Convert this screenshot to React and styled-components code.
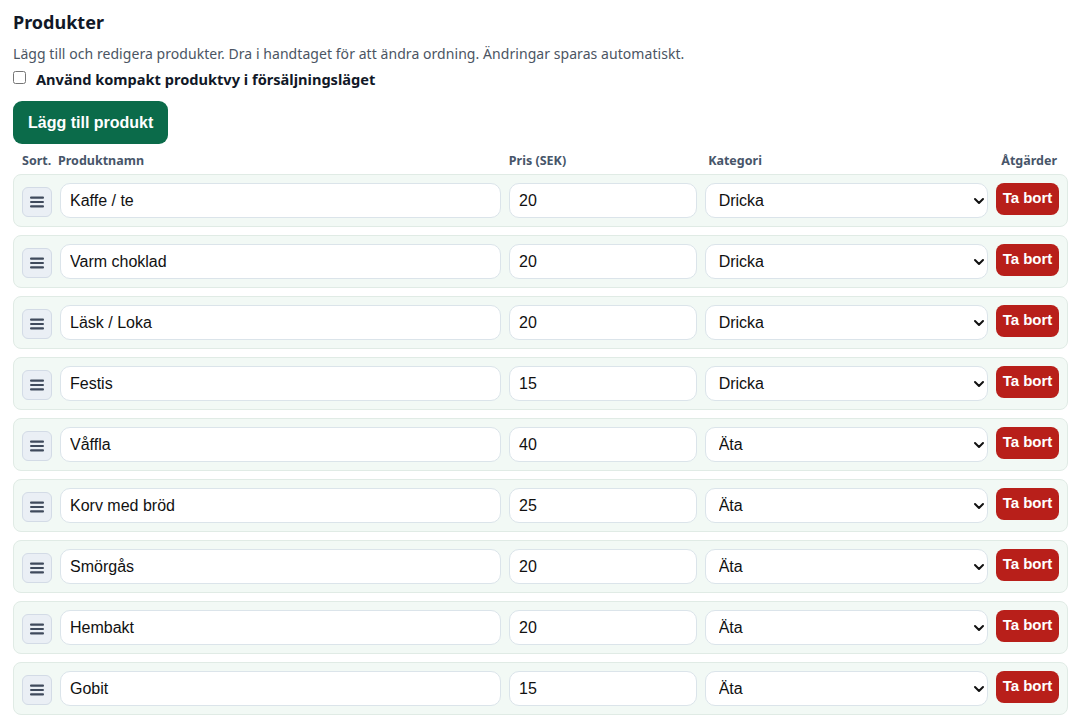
import React, { useState } from 'react'
import styled, { createGlobalStyle } from 'styled-components'

const GlobalStyle = createGlobalStyle`
  html, body {
    margin: 0;
    background: #ffffff;
    font-family: "Segoe UI", "Noto Sans", sans-serif;
    color: #111827;
  }
`

const initialProducts = [
  { id: 1, name: 'Kaffe / te', price: '20', category: 'Dricka' },
  { id: 2, name: 'Varm choklad', price: '20', category: 'Dricka' },
  { id: 3, name: 'Läsk / Loka', price: '20', category: 'Dricka' },
  { id: 4, name: 'Festis', price: '15', category: 'Dricka' },
  { id: 5, name: 'Våffla', price: '40', category: 'Äta' },
  { id: 6, name: 'Korv med bröd', price: '25', category: 'Äta' },
  { id: 7, name: 'Smörgås', price: '20', category: 'Äta' },
  { id: 8, name: 'Hembakt', price: '20', category: 'Äta' },
  { id: 9, name: 'Gobit', price: '15', category: 'Äta' },
]

function App() {
  const [products, setProducts] = useState(initialProducts)
  const [compact, setCompact] = useState(false)

  const update = (id, field, value) =>
    setProducts(list => list.map(p => (p.id === id ? { ...p, [field]: value } : p)))

  return (
    <Page>
      <GlobalStyle />
      <Title>Produkter</Title>
      <Hint>Lägg till och redigera produkter. Dra i handtaget för att ändra ordning. Ändringar sparas automatiskt.</Hint>
      <CheckRow>
        <input type="checkbox" checked={compact} onChange={e => setCompact(e.target.checked)} />
        <span>Använd kompakt produktvy i försäljningsläget</span>
      </CheckRow>
      <AddButton>Lägg till produkt</AddButton>

      <HeaderRow>
        <HeadCell>Sort.</HeadCell>
        <HeadCell>Produktnamn</HeadCell>
        <HeadCell>Pris (SEK)</HeadCell>
        <HeadCell $indent>Kategori</HeadCell>
        <HeadCell $right>Åtgärder</HeadCell>
      </HeaderRow>

      <List>
        {products.map(p => (
          <Card key={p.id}>
            <Handle aria-label="Flytta">
              <svg width="14" height="12" viewBox="0 0 14 12">
                <rect x="0" y="0.5" width="14" height="2.2" rx="1" fill="#3f4a5c" />
                <rect x="0" y="4.9" width="14" height="2.2" rx="1" fill="#3f4a5c" />
                <rect x="0" y="9.3" width="14" height="2.2" rx="1" fill="#3f4a5c" />
              </svg>
            </Handle>
            <Field value={p.name} onChange={e => update(p.id, 'name', e.target.value)} />
            <Field value={p.price} onChange={e => update(p.id, 'price', e.target.value)} />
            <SelectWrap>
              <Select value={p.category} onChange={e => update(p.id, 'category', e.target.value)}>
                <option>Dricka</option>
                <option>Äta</option>
              </Select>
              <Chevron width="12" height="8" viewBox="0 0 12 8">
                <path d="M2 2l4 4 4-4" fill="none" stroke="#111" strokeWidth="2" strokeLinecap="round" strokeLinejoin="round" />
              </Chevron>
            </SelectWrap>
            <RemoveButton>Ta bort</RemoveButton>
          </Card>
        ))}
      </List>
    </Page>
  )
}

export default App

const Page = styled.div`
  padding: 8px 16px 16px 13px;
`

const Title = styled.h2`
  margin: 0;
  font-size: 18px;
  font-weight: 700;
  line-height: 28px;
  color: #111827;
`

const Hint = styled.p`
  margin: 8px 0 0;
  font-size: 14px;
  letter-spacing: 0.06px;
  line-height: 20px;
  color: #4b5563;
`

const CheckRow = styled.label`
  display: flex;
  align-items: center;
  gap: 10px;
  margin-top: 4px;
  font-size: 14.6px;
  font-weight: 700;
  line-height: 22px;
  color: #111827;

  input {
    margin: 0 0 4px 0;
    width: 13px;
    height: 13px;
  }
`

const AddButton = styled.button`
  margin-top: 11px;
  height: 43px;
  padding: 0 15px;
  border: none;
  border-radius: 9px;
  background: #0b6b4a;
  color: #ffffff;
  font-family: "Liberation Sans", Arial, sans-serif;
  font-size: 16px;
  font-weight: 700;
  cursor: pointer;
`

const columns = '30px minmax(0, 2.35fr) minmax(0, 1fr) minmax(0, 1.51fr) 63px'

const HeaderRow = styled.div`
  display: grid;
  grid-template-columns: ${columns};
  gap: 6px;
  padding: 9px 9px 5px;
`

const HeadCell = styled.div`
  font-size: 12.5px;
  font-weight: 700;
  line-height: 16px;
  color: #475569;
  padding-left: ${p => (p.$indent ? '4px' : '0')};
  text-align: ${p => (p.$right ? 'right' : 'left')};
  margin-right: ${p => (p.$right ? '2px' : '0')};
`

const List = styled.div`
  display: flex;
  flex-direction: column;
  gap: 8px;
`

const Card = styled.div`
  display: grid;
  grid-template-columns: ${columns};
  align-items: center;
  gap: 8px;
  padding: 8px;
  border: 1px solid #e0ebe5;
  border-radius: 8px;
  background: #f2f9f5;
`

const Handle = styled.button`
  width: 30px;
  height: 30px;
  padding: 0;
  margin-top: 2px;
  display: flex;
  align-items: center;
  justify-content: center;
  border: 1px solid #d3dbe6;
  border-radius: 6px;
  background: #eaeff5;
  cursor: grab;
`

const Field = styled.input`
  box-sizing: border-box;
  width: 100%;
  height: 35px;
  padding: 0 9px;
  border: 1px solid #dbe4ea;
  border-radius: 10px;
  background: #ffffff;
  font-family: "Liberation Sans", Arial, sans-serif;
  font-size: 16px;
  color: #111111;
  outline: none;
`

const SelectWrap = styled.div`
  position: relative;
`

const Select = styled.select`
  box-sizing: border-box;
  width: 100%;
  height: 35px;
  padding: 0 9px 0 13px;
  border: 1px solid #dbe4ea;
  border-radius: 10px;
  background: #ffffff;
  font-family: "Liberation Sans", Arial, sans-serif;
  font-size: 16px;
  color: #111111;
  appearance: none;
  outline: none;
`

const Chevron = styled.svg`
  position: absolute;
  right: 3px;
  top: 14px;
  pointer-events: none;
`

const RemoveButton = styled.button`
  align-self: start;
  height: 32px;
  width: 63px;
  padding: 0 0 3px;
  border: none;
  border-radius: 8px;
  background: #b81f1a;
  color: #ffffff;
  font-family: "Liberation Sans", Arial, sans-serif;
  font-size: 15px;
  font-weight: 700;
  cursor: pointer;
`
